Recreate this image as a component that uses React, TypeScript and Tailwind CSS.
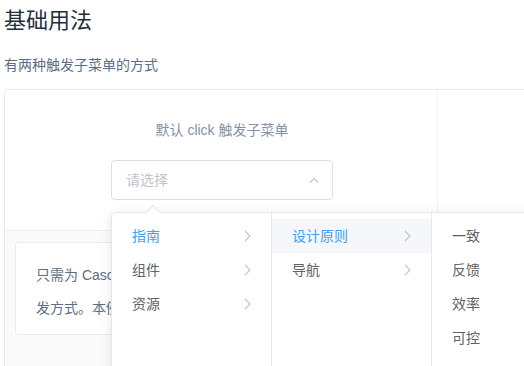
import React from "react";

type Item = { label: string; active?: boolean; hover?: boolean; children?: boolean };

const col1: Item[] = [
  { label: "指南", active: true, children: true },
  { label: "组件", children: true },
  { label: "资源", children: true },
];
const col2: Item[] = [
  { label: "设计原则", active: true, hover: true, children: true },
  { label: "导航", children: true },
];
const col3: Item[] = [{ label: "一致" }, { label: "反馈" }, { label: "效率" }, { label: "可控" }];

const ArrowRight = () => (
  <svg width="7" height="12" viewBox="0 0 7 12" fill="none">
    <path d="M1 1l5 5-5 5" stroke="#c0c4cc" strokeWidth="1.1" />
  </svg>
);

const Panel = ({ items }: { items: Item[] }) => (
  <div className="w-[160px] shrink-0 h-[204px] border-r border-[#e4e7ed] py-[6px]">
    {items.map((it) => (
      <div
        key={it.label}
        className={
          "flex h-[34px] items-center justify-between pl-5 pr-5 text-[14px] " +
          (it.hover ? "bg-[#f5f7fa] " : "") +
          (it.active ? "text-[#409eff]" : "text-[#606266]")
        }
      >
        <span>{it.label}</span>
        {it.children && <ArrowRight />}
      </div>
    ))}
  </div>
);

const Cascader = () => (
  <div className="relative inline-block w-[222px] text-left align-top">
    <div className="flex h-10 items-center justify-between rounded border border-[#dcdfe6] bg-white pl-[14px] pr-[13px]">
      <span className="text-[14px] text-[#c0c4cc]">请选择</span>
      <svg width="10" height="6" viewBox="0 0 10 6" fill="none">
        <path d="M1 5.5l4-4 4 4" stroke="#c0c4cc" strokeWidth="1.1" />
      </svg>
    </div>
    <div className="absolute left-0 top-[52px] z-10 flex rounded border border-[#e4e7ed] bg-white shadow-[0_2px_12px_0_rgba(0,0,0,0.1)]">
      <div className="absolute left-[36px] top-[-6px] h-[10px] w-[10px] rotate-45 border-l border-t border-[#e4e7ed] bg-white" />
      <Panel items={col1} />
      <Panel items={col2} />
      <Panel items={col3} />
    </div>
  </div>
);

const App = () => {
  return (
    <div className="h-screen w-screen overflow-hidden bg-white font-['Liberation_Sans','Noto_Sans_CJK_SC',sans-serif]">
      <div className="w-[900px] pl-1 pt-1">
        <h3 className="text-[22px] font-normal leading-[33px] text-[#1f2f3d]">基础用法</h3>
        <p className="mt-[17px] text-[14px] leading-[22px] text-[#5e6d82]">有两种触发子菜单的方式</p>
        <div className="mt-[13px] rounded-[3px] border border-[#ebebeb]">
          <div className="flex">
            <div className="w-[433px] border-r border-[#eff2f6] py-[30px] pl-[2px] text-center">
              <span className="mb-5 block text-[14px] leading-[20px] text-[#8492a6]">默认 click 触发子菜单</span>
              <Cascader />
            </div>
            <div className="w-[433px] py-[30px] text-center">
              <span className="mb-5 block text-[14px] leading-[20px] text-[#8492a6]">hover 触发子菜单</span>
            </div>
          </div>
          <div className="h-[200px] border-t border-[#eaeefb] bg-[#fafafa] pt-[11px] pl-[10px]">
            <div className="w-[640px] overflow-hidden rounded-[3px] border border-[#ebebeb] bg-white pb-[9px] pl-5 pt-4 text-[14px] leading-[33px] text-[#5e6d82]">
              <div className="whitespace-nowrap">只需为 Cascader 的 options 属性指定选项数组即可渲染出一个级联选择器。通过 props.expandTrigger 可以定义展开子级菜单的触</div>
              <div className="whitespace-nowrap">发方式。本例还展示了 change 事件，它的参数为 Cascader 的绑定值：一个由各级菜单的值所组成的数组。</div>
            </div>
          </div>
        </div>
      </div>
    </div>
  );
};

export default App;
